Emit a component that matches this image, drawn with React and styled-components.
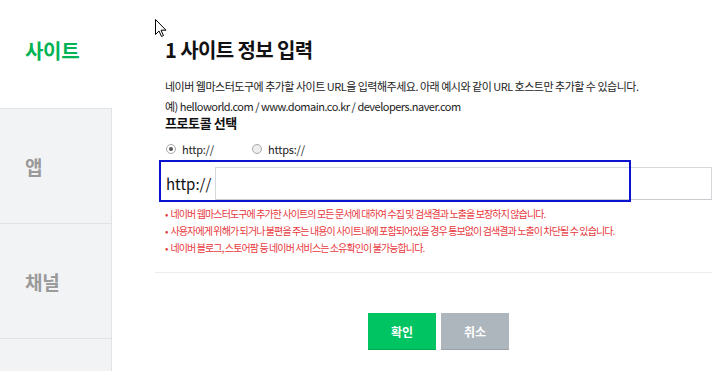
import React from "react";
import styled, { createGlobalStyle } from "styled-components";

const Global = createGlobalStyle`
  html, body { margin: 0; padding: 0; background: #fff; }
  body { font-family: "Noto Sans CJK KR", "Noto Sans", sans-serif; color: #222; }
  * { box-sizing: border-box; }
`;

const Page = styled.div`
  display: flex;
  width: 720px;
  height: 371px;
  overflow: hidden;
  position: relative;
`;

const Sidebar = styled.nav`
  width: 112px;
  flex: none;
  display: flex;
  flex-direction: column;
`;

const ActiveTab = styled.div`
  height: 108px;
  flex: none;
  display: flex;
  align-items: center;
  padding: 0 0 8px 25px;
  font-size: 20px;
  font-weight: 700;
  color: #00b355;
  letter-spacing: -0.3px;
`;

const Tab = styled.div`
  height: 115px;
  flex: none;
  display: flex;
  align-items: center;
  padding-left: 25px;
  background: #f2f3f5;
  border-top: 1px solid #e2e3e5;
  border-right: 1px solid #e2e3e5;
  font-size: 19px;
  font-weight: 700;
  color: #9a9a9a;
  letter-spacing: -0.3px;
`;

const Main = styled.main`
  flex: 1;
  padding: 37px 8px 0 53px;
  display: flex;
  flex-direction: column;
`;

const Title = styled.h1`
  margin: 0;
  font-size: 20px;
  line-height: 26px;
  font-weight: 700;
  color: #111;
  letter-spacing: -0.6px;
`;

const Desc = styled.p`
  margin: ${(p) => p.$top || 0}px 0 0;
  font-size: 11px;
  line-height: 20px;
  color: #222;
  letter-spacing: ${(p) => p.$ls || "-0.5px"};
`;

const SubTitle = styled.h2`
  margin: -2px 0 0;
  font-size: 13px;
  line-height: 17px;
  font-weight: 700;
  color: #111;
  letter-spacing: -0.4px;
`;

const RadioRow = styled.div`
  display: flex;
  align-items: center;
  margin-top: 10px;
  height: 16px;
  padding-left: 1px;
`;

const RadioLabel = styled.label`
  display: flex;
  align-items: center;
  gap: 6px;
  width: 86px;
  font-size: 11px;
  color: #222;
  letter-spacing: -0.2px;
`;

const RadioDot = styled.span`
  width: 10px;
  height: 10px;
  border-radius: 50%;
  border: 1px solid #a8a8a8;
  background: ${(p) => (p.$checked ? "#fff" : "#eee")};
  display: flex;
  align-items: center;
  justify-content: center;
  &::after {
    content: "";
    width: 4px;
    height: 4px;
    border-radius: 50%;
    background: ${(p) => (p.$checked ? "#555" : "transparent")};
  }
`;

const InputRow = styled.div`
  position: relative;
  display: flex;
  align-items: center;
  margin-top: 10px;
  height: 33px;
`;

const Proto = styled.span`
  width: 50px;
  flex: none;
  font-size: 15px;
  color: #111;
  padding-left: 1px;
`;

const UrlInput = styled.input`
  flex: 1;
  height: 33px;
  border: 1px solid #d4d7db;
  border-bottom-color: #c8ccd1;
  outline: none;
  background: #fff;
`;

const Highlight = styled.div`
  position: absolute;
  left: -6px;
  top: -7px;
  width: 472px;
  height: 42px;
  border: 2px solid #0a14d0;
  pointer-events: none;
`;

const Notes = styled.ul`
  list-style: none;
  margin: 5px 0 0;
  padding: 0;
`;

const Note = styled.li`
  font-size: 10px;
  line-height: 17px;
  color: #e8383d;
  letter-spacing: -0.9px;
  &::before {
    content: "•";
    margin-right: 3px;
  }
`;

const Divider = styled.hr`
  margin: 16px 0 0 -10px;
  border: none;
  border-top: 1px solid #ececec;
`;

const Buttons = styled.div`
  display: flex;
  justify-content: center;
  gap: 5px;
  margin-top: 40px;
`;

const Button = styled.button`
  width: 68px;
  height: 37px;
  border: none;
  background: ${(p) => (p.$primary ? "#00c462" : "#adb5bd")};
  border-bottom: 1px solid ${(p) => (p.$primary ? "#00a854" : "#9aa1a9")};
  color: #fff;
  font-family: inherit;
  font-size: 12px;
  font-weight: 700;
`;

const Cursor = styled.svg`
  position: absolute;
  left: 155px;
  top: 19px;
`;

export default function App() {
  return (
    <Page>
      <Global />
      <Sidebar>
        <ActiveTab>사이트</ActiveTab>
        <Tab>앱</Tab>
        <Tab>채널</Tab>
        <Tab />
      </Sidebar>
      <Main>
        <Title>1 사이트 정보 입력</Title>
        <Desc $top={13}>
          네이버 웹마스터도구에 추가할 사이트 URL을 입력해주세요. 아래 예시와 같이 URL 호스트만 추가할 수 있습니다.
        </Desc>
        <Desc $ls="-0.5px">예) helloworld.com / www.domain.co.kr / developers.naver.com</Desc>
        <SubTitle>프로토콜 선택</SubTitle>
        <RadioRow>
          <RadioLabel>
            <RadioDot $checked />
            http://
          </RadioLabel>
          <RadioLabel>
            <RadioDot />
            https://
          </RadioLabel>
        </RadioRow>
        <InputRow>
          <Proto>http://</Proto>
          <UrlInput />
          <Highlight />
        </InputRow>
        <Notes>
          <Note>네이버 웹마스터도구에 추가한 사이트의 모든 문서에 대하여 수집 및 검색결과 노출을 보장하지 않습니다.</Note>
          <Note>사용자에게 위해가 되거나 불편을 주는 내용이 사이트내에 포함되어있을 경우 통보없이 검색결과 노출이 차단될 수 있습니다.</Note>
          <Note>네이버 블로그, 스토어팜 등 네이버 서비스는 소유확인이 불가능합니다.</Note>
        </Notes>
        <Divider />
        <Buttons>
          <Button $primary>확인</Button>
          <Button>취소</Button>
        </Buttons>
      </Main>
      <Cursor width="12" height="19" viewBox="0 0 12 19">
        <path d="M0.5 0.5 L0.5 15.5 L4 12 L6.5 17.5 L8.5 16.6 L6 11.2 L11 11.2 Z" fill="#fff" stroke="#000" strokeWidth="1" strokeLinejoin="round" />
      </Cursor>
    </Page>
  );
}
